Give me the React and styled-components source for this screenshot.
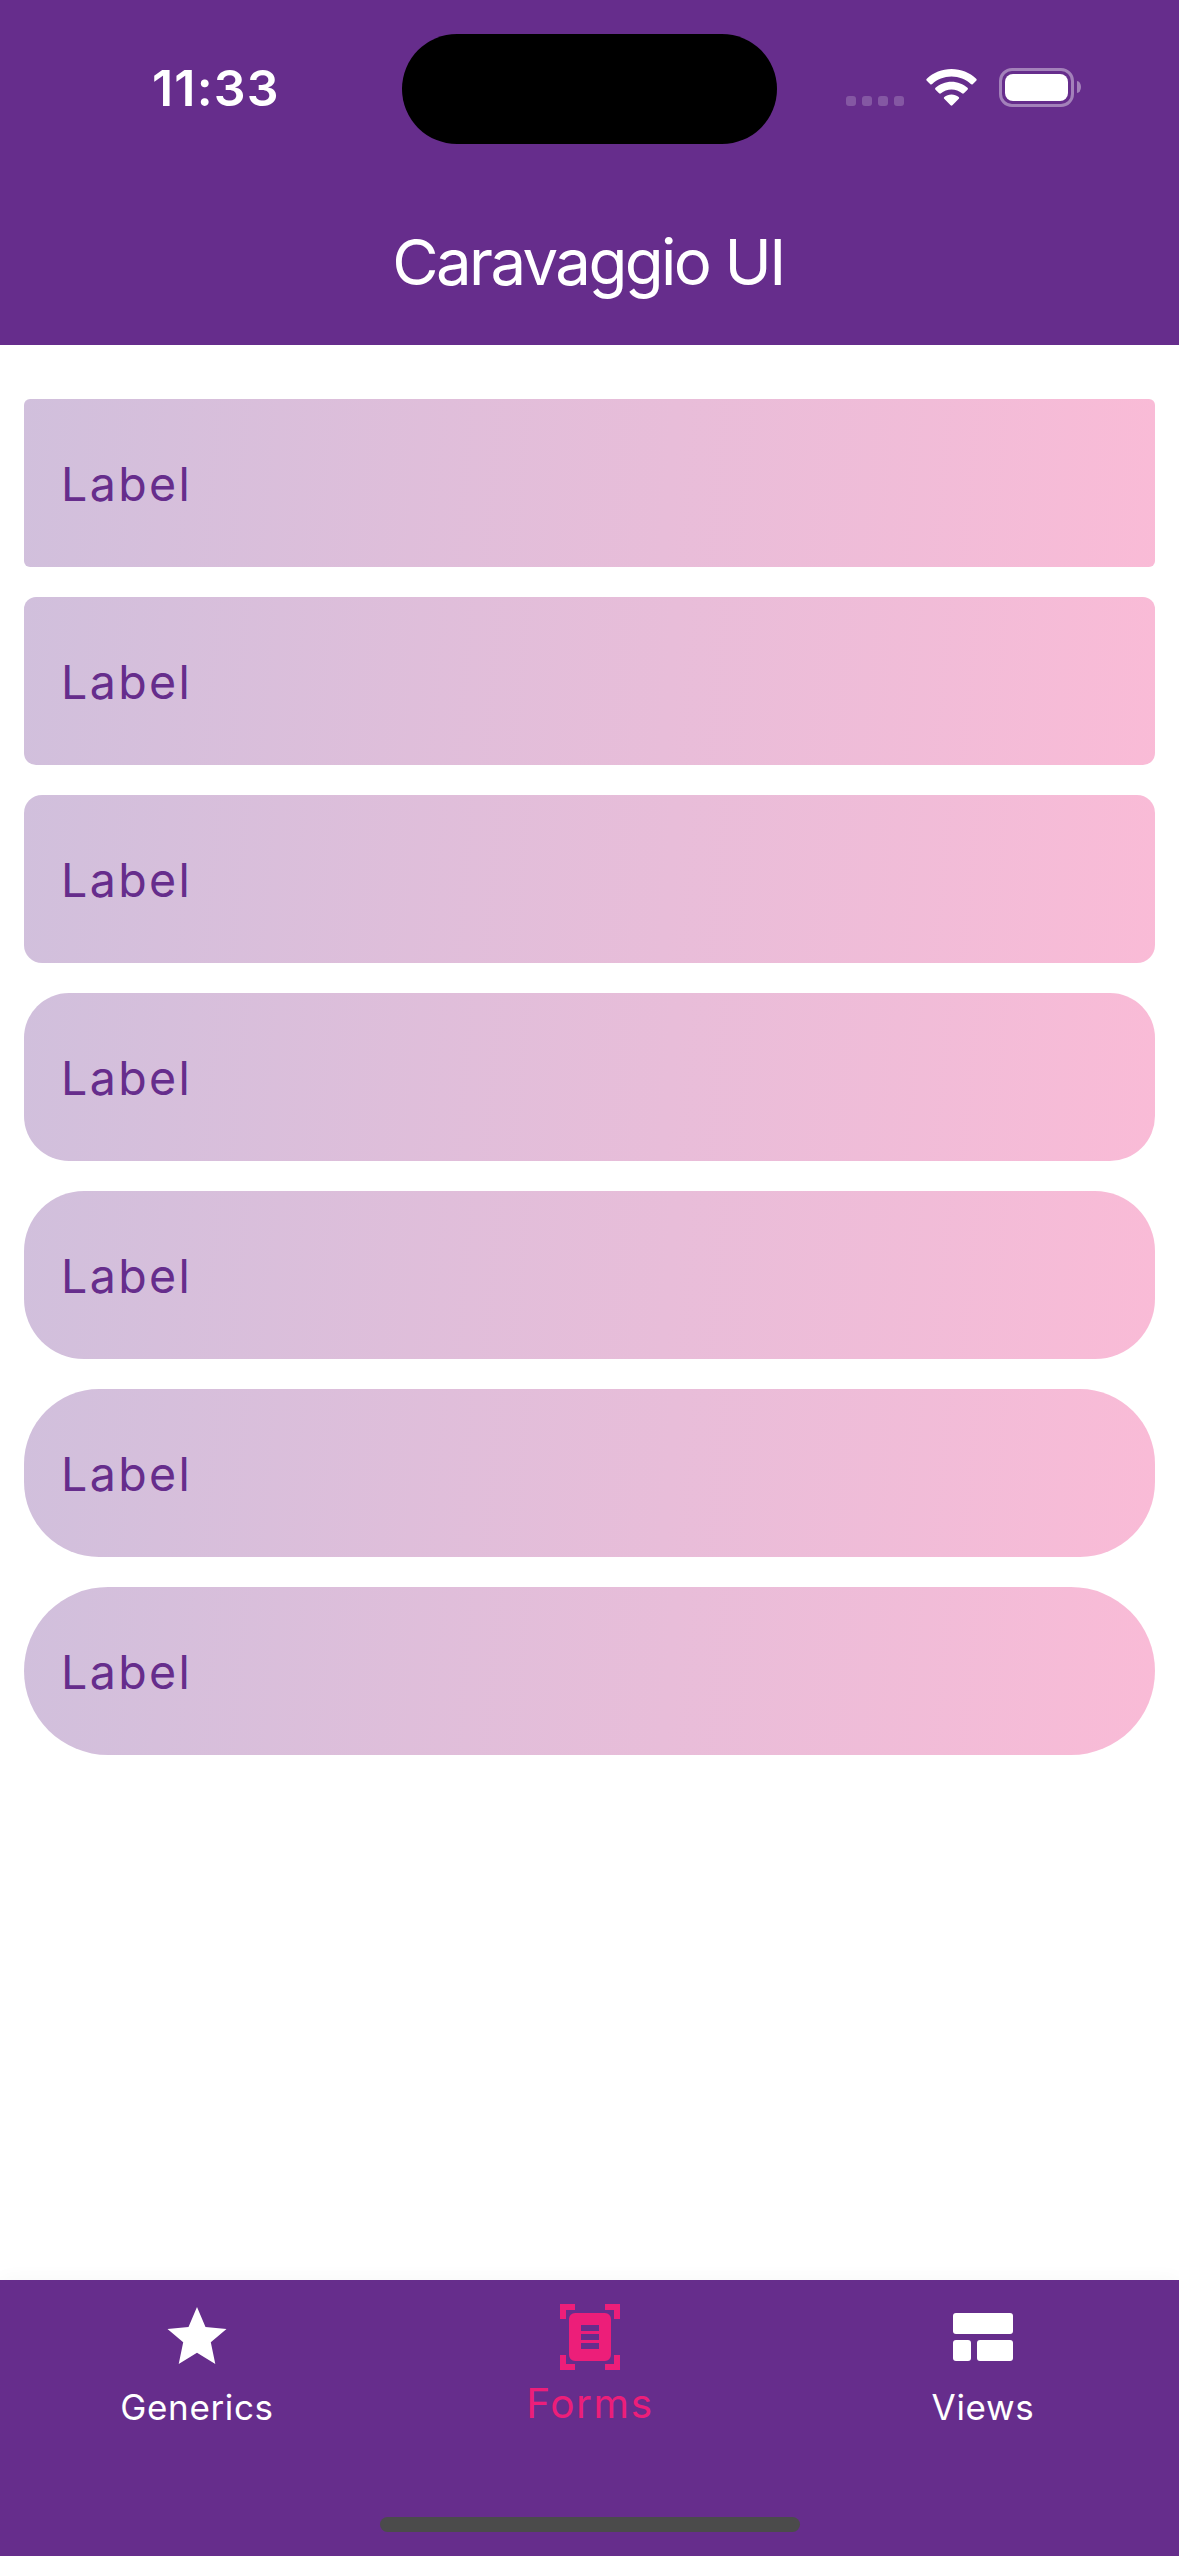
import React from "react";
import styled, { createGlobalStyle } from "styled-components";

const purple = "#662d8c";
const pink = "#ed1e79";

const GlobalStyle = createGlobalStyle`
  * { box-sizing: border-box; }
  body { margin: 0; background: #fff; font-family: Inter, "Liberation Sans", sans-serif; }
`;

const Screen = styled.div`
  width: 1179px;
  height: 2556px;
  display: flex;
  flex-direction: column;
  background: #fff;
  overflow: hidden;
`;

const Header = styled.header`
  height: 345px;
  background: ${purple};
  color: #fff;
`;

const StatusBar = styled.div`
  display: grid;
  grid-template-columns: 402px 375px 402px;
  height: 177px;
`;

const Clock = styled.div`
  padding-left: 152px;
  font-size: 50px;
  font-weight: 600;
  line-height: 176px;
  letter-spacing: 1.2px;
  white-space: nowrap;
`;

const Island = styled.div`
  height: 110px;
  margin-top: 34px;
  border-radius: 55px;
  background: #000;
`;

const StatusIcons = styled.div`
  padding: 68px 0 0 69px;
  display: flex;
  align-items: flex-start;
`;

const Cellular = styled.div`
  display: flex;
  gap: 6px;
  margin: 28px 22px 0 0;
`;

const SignalDot = styled.span`
  width: 10px;
  height: 10px;
  border-radius: 3px;
  background: rgba(255, 255, 255, 0.2);
`;

const WifiIcon = styled.svg`
  width: 51px;
  height: 39px;
  margin-right: 22px;
`;

const Battery = styled.div`
  width: 75px;
  height: 39px;
  padding: 3px;
  border: 3px solid rgba(255, 255, 255, 0.4);
  border-radius: 13px;
`;

const BatteryLevel = styled.div`
  height: 27px;
  border-radius: 8px;
  background: #fff;
`;

const BatteryCap = styled.div`
  width: 4px;
  height: 12px;
  margin: 13px 0 0 3px;
  border-radius: 0 4px 4px 0 / 0 6px 6px 0;
  background: rgba(255, 255, 255, 0.4);
`;

const Title = styled.h1`
  margin: 0;
  padding-right: 3px;
  font-size: 63.5px;
  font-weight: 400;
  line-height: 169px;
  letter-spacing: -2.6px;
  text-align: center;
`;

const FieldList = styled.main`
  flex: 1;
  display: flex;
  flex-direction: column;
  gap: 30px;
  padding: 54px 24px 0;
`;

const Field = styled.div`
  height: 168px;
  padding-left: 37px;
  border-radius: ${(p) => p.$radius}px;
  background: linear-gradient(95deg, rgba(102, 45, 140, 0.3), rgba(237, 30, 121, 0.3));
  color: ${purple};
  font-size: 46.5px;
  font-weight: 400;
  line-height: 170px;
  letter-spacing: 2.4px;
`;

const TabBar = styled.nav`
  display: grid;
  grid-template-columns: repeat(3, 1fr);
  grid-template-rows: 1fr 39px;
  height: 276px;
  background: ${purple};
  box-shadow: 0 -2px 18px rgba(0, 0, 0, 0.03);
`;

const Tab = styled.div`
  display: flex;
  flex-direction: column;
  align-items: center;
  padding-top: 21px;
  color: ${(p) => (p.$active ? pink : "#fff")};
`;

const TabIcon = styled.svg`
  width: 72px;
  height: 72px;
  fill: currentColor;
`;

const TabLabel = styled.span`
  margin-top: ${(p) => (p.$active ? 5 : 8)}px;
  padding-left: 1px;
  font-size: ${(p) => (p.$active ? 40.5 : 35)}px;
  font-weight: 400;
  line-height: 52px;
  letter-spacing: ${(p) => (p.$active ? 1.6 : 0.65)}px;
`;

const HomeIndicator = styled.div`
  grid-column: 1 / -1;
  justify-self: center;
  width: 420px;
  height: 15px;
  border-radius: 8px;
  background: #4b4b4b;
`;

const radii = [6, 12, 18, 45, 60, 75, 84];

const tabs = [
  {
    name: "Generics",
    icon: <path d="M36 6L44.5 26L65.5 28L49.8 41.3L54.3 63L36 51.7L17.7 63L22.2 41.3L6.5 28L27.5 26Z" />,
  },
  {
    name: "Forms",
    active: true,
    icon: (
      <>
        <path d="M6 3H21V9H12V18H6ZM51 3H66V18H60V9H51ZM6 54H12V63H21V69H6ZM60 54H66V69H51V63H60Z" />
        <path
          fillRule="evenodd"
          d="M21 12H51A6 6 0 0 1 57 18V54A6 6 0 0 1 51 60H21A6 6 0 0 1 15 54V18A6 6 0 0 1 21 12ZM27 24V30H45V24ZM27 33V39H45V33ZM27 42V48H45V42Z"
        />
      </>
    ),
  },
  {
    name: "Views",
    icon: (
      <>
        <rect x="6" y="12" width="60" height="21" rx="3" />
        <rect x="6" y="39" width="18" height="21" rx="3" />
        <rect x="30" y="39" width="36" height="21" rx="3" />
      </>
    ),
  },
];

export default function App() {
  return (
    <Screen>
      <GlobalStyle />
      <Header>
        <StatusBar>
          <Clock>11:33</Clock>
          <Island />
          <StatusIcons>
            <Cellular>
              <SignalDot />
              <SignalDot />
              <SignalDot />
              <SignalDot />
            </Cellular>
            <WifiIcon viewBox="0 0 51 39" fill="#fff">
              <path d="M25.5 1C35 1 43.7 4.6 50.2 10.7Q51.2 11.8 50.2 12.8L46.7 16.2Q45.8 17 44.8 16.1C39.7 11.4 33 8.6 25.5 8.6S11.3 11.4 6.2 16.1Q5.2 17 4.3 16.2L.8 12.8Q-.2 11.8 .8 10.7C7.3 4.6 16 1 25.5 1Z" />
              <path d="M25.5 13.7C31.6 13.7 37.2 16 41.5 19.8Q42.5 20.8 41.5 21.8L37.9 25.3Q37 26.1 36 25.3C33.2 22.9 29.5 21.4 25.5 21.4S17.8 22.9 15 25.3Q14 26.1 13.1 25.3L9.5 21.8Q8.5 20.8 9.5 19.8C13.8 16 19.4 13.7 25.5 13.7Z" />
              <path d="M25.5 26.4C28.2 26.4 30.7 27.3 32.7 28.9Q33.7 29.9 32.8 30.8L26.4 37.2Q25.5 38.1 24.6 37.2L18.2 30.8Q17.3 29.9 18.3 28.9C20.3 27.3 22.8 26.4 25.5 26.4Z" />
            </WifiIcon>
            <Battery>
              <BatteryLevel />
            </Battery>
            <BatteryCap />
          </StatusIcons>
        </StatusBar>
        <Title>Caravaggio UI</Title>
      </Header>
      <FieldList>
        {radii.map((radius) => (
          <Field key={radius} $radius={radius}>
            Label
          </Field>
        ))}
      </FieldList>
      <TabBar>
        {tabs.map((tab) => (
          <Tab key={tab.name} $active={tab.active}>
            <TabIcon viewBox="0 0 72 72">{tab.icon}</TabIcon>
            <TabLabel $active={tab.active}>{tab.name}</TabLabel>
          </Tab>
        ))}
        <HomeIndicator />
      </TabBar>
    </Screen>
  );
}
